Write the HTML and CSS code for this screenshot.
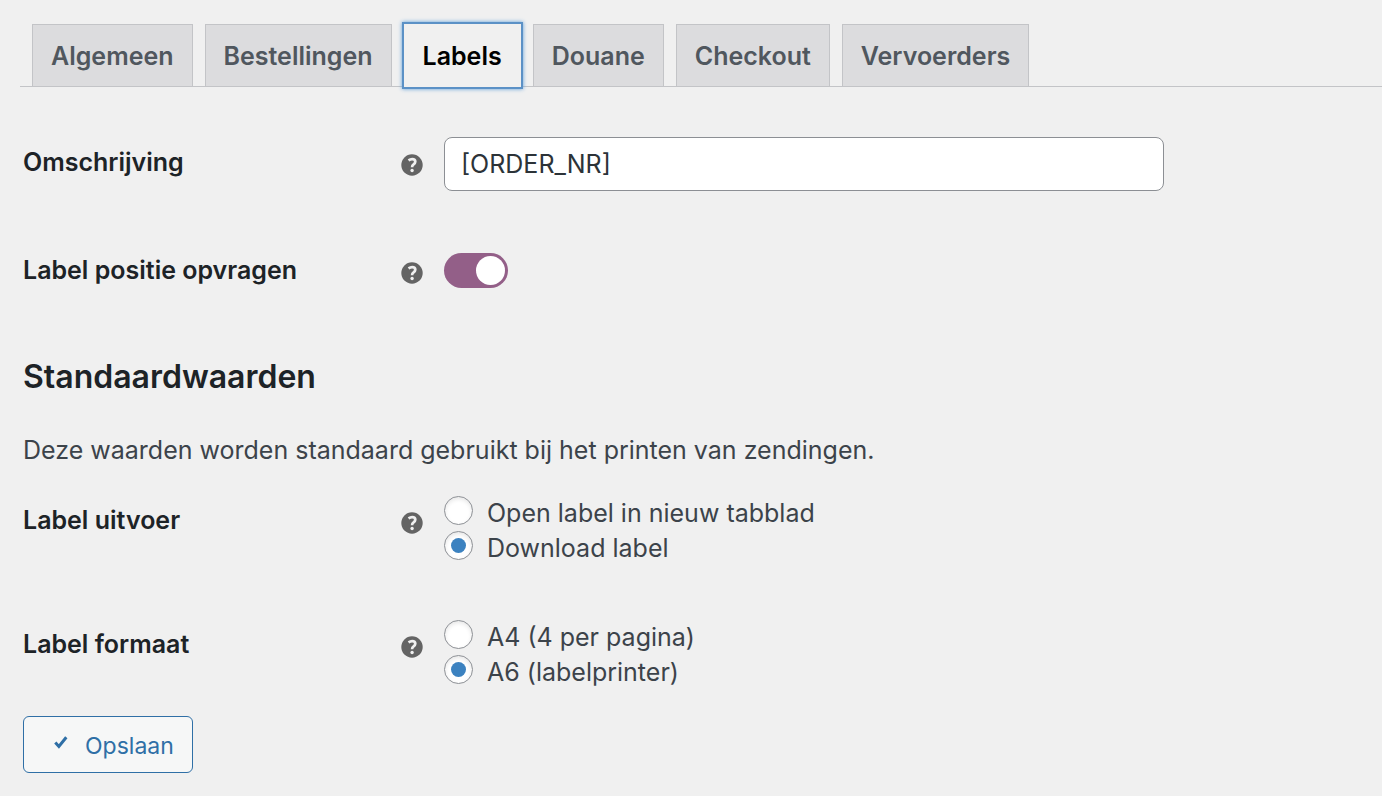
FILE: index.html
```html
<!DOCTYPE html>
<html lang="nl">
<head>
<meta charset="utf-8">
<meta name="viewport" content="width=device-width, initial-scale=1">
<title>Labels</title>
<link rel="stylesheet" href="styles.css">
</head>
<body>
<svg class="sprite" aria-hidden="true">
  <symbol id="help" viewBox="0 0 22 22">
    <circle cx="11" cy="11" r="10.7" fill="#646464"/>
    <path d="M7.5 6.4C9 5.4 9.9 5.1 11.1 5.1C13.2 5.1 14.3 6.1 14.3 7.7C14.3 9.2 13.3 9.9 12.3 10.6C11.4 11.2 11.1 11.7 11.1 13.3" fill="none" stroke="#f0f0f0" stroke-width="2.7"/>
    <circle cx="11.1" cy="16.5" r="1.7" fill="#f0f0f0"/>
  </symbol>
</svg>
<nav class="tabs">
  <a class="tab" href="#algemeen">Algemeen</a>
  <a class="tab" href="#bestellingen">Bestellingen</a>
  <a class="tab tab-active" href="#labels" aria-current="page">Labels</a>
  <a class="tab" href="#douane">Douane</a>
  <a class="tab" href="#checkout">Checkout</a>
  <a class="tab" href="#vervoerders">Vervoerders</a>
</nav>
<form class="settings">
  <div class="row row-description">
    <label class="row-label" for="description">Omschrijving</label>
    <svg class="help"><use href="#help"/></svg>
    <input class="text-input" id="description" type="text" value="[ORDER_NR]">
  </div>
  <div class="row row-position">
    <label class="row-label" for="position">Label positie opvragen</label>
    <svg class="help"><use href="#help"/></svg>
    <input class="toggle" id="position" type="checkbox" role="switch" checked>
  </div>
  <h2 class="heading">Standaardwaarden</h2>
  <p class="intro">Deze waarden worden standaard gebruikt bij het printen van zendingen.</p>
  <div class="row row-options" role="radiogroup" aria-labelledby="output-label">
    <span class="row-label" id="output-label">Label uitvoer</span>
    <svg class="help"><use href="#help"/></svg>
    <div class="options">
      <label class="option"><input class="radio" type="radio" name="output"><span class="option-text">Open label in nieuw tabblad</span></label>
      <label class="option"><input class="radio" type="radio" name="output" checked><span class="option-text">Download label</span></label>
    </div>
  </div>
  <div class="row row-options" role="radiogroup" aria-labelledby="format-label">
    <span class="row-label" id="format-label">Label formaat</span>
    <svg class="help"><use href="#help"/></svg>
    <div class="options">
      <label class="option"><input class="radio" type="radio" name="format"><span class="option-text">A4 (4 per pagina)</span></label>
      <label class="option"><input class="radio" type="radio" name="format" checked><span class="option-text">A6 (labelprinter)</span></label>
    </div>
  </div>
  <button class="save" type="button">
    <svg class="check" viewBox="0 0 14 13"><path d="M1.3 6.4L4.9 10.4L12.3 1.2" fill="none" stroke="#2f6fa6" stroke-width="3"/></svg>
    <span>Opslaan</span>
  </button>
</form>
</body>
</html>
```
FILE: styles.css
```css
* {
  box-sizing: border-box;
}

body {
  margin: 0;
  padding-top: 24px;
  background: #f0f0f0;
  color: #3c434a;
  font-family: Inter, "Liberation Sans", sans-serif;
  font-size: 25px;
  line-height: 35px;
}

.sprite {
  position: absolute;
  width: 0;
  height: 0;
}

.tabs {
  display: flex;
  gap: 12px;
  margin-left: 20px;
  padding-left: 12px;
  border-bottom: 1px solid #c3c4c7;
}

.tab {
  padding: 14px 18px 12px;
  border: 1px solid #c3c4c7;
  border-bottom: 0;
  background: #dcdcde;
  color: #50575e;
  font-weight: 600;
  text-decoration: none;
}

.tab-active {
  margin-bottom: -1px;
  border-color: #f0f0f0;
  background: #f0f0f0;
  color: #000;
  box-shadow: 0 0 0 2px #5b91c6, 0 0 4px 2px #5b9dd9;
}

.settings {
  padding: 50px 24px 22px 23px;
}

.row {
  display: grid;
  grid-template-columns: 357px 22px minmax(0, 720px);
  column-gap: 21px;
  align-items: start;
}

.row-label {
  color: #1d2327;
  font-weight: 600;
}

.help {
  width: 22px;
  height: 22px;
}

.row-description .row-label {
  padding-top: 8px;
}

.row-description .help {
  margin-top: 17px;
}

.text-input {
  width: 100%;
  height: 54px;
  padding: 0 16px;
  border: 1px solid #8c8f94;
  border-radius: 8px;
  background: #fff;
  color: #2c3338;
  font: inherit;
}

.row-position {
  margin-top: 62px;
}

.row-position .help {
  margin-top: 9px;
}

.toggle {
  display: flex;
  justify-content: flex-end;
  width: 64px;
  height: 35px;
  margin: 0;
  padding: 3px;
  border-radius: 18px;
  background: #935f88;
  appearance: none;
}

.toggle::before {
  content: "";
  width: 29px;
  height: 29px;
  border-radius: 50%;
  background: #fff;
}

.heading {
  margin: 68px 0 0;
  color: #1d2327;
  font-size: 32px;
  font-weight: 600;
  line-height: 42px;
}

.intro {
  margin: 35px 0 28px;
}

.row-options {
  margin-bottom: 54px;
}

.row-options:last-of-type {
  margin-bottom: 26px;
}

.row-options .row-label {
  padding-top: 7px;
}

.row-options .help {
  margin-top: 16px;
}

.option {
  display: flex;
  gap: 14px;
}

.radio {
  display: grid;
  place-items: center;
  width: 29px;
  height: 29px;
  margin: 0;
  border: 1px solid #8c8f94;
  border-radius: 50%;
  background: #fff;
  box-shadow: inset 0 2px 4px rgba(0, 0, 0, 0.1);
  appearance: none;
}

.radio:checked::before {
  content: "";
  width: 15px;
  height: 15px;
  border-radius: 50%;
  background: #3c82c0;
}

.save {
  display: flex;
  align-items: center;
  gap: 17px;
  height: 57px;
  padding: 4px 18px 0 30px;
  border: 1px solid #2f6fa6;
  border-radius: 6px;
  background: #f6f7f7;
  color: #2f6fa6;
  font: inherit;
  font-size: 23px;
}

.check {
  width: 14px;
  height: 13px;
  margin-bottom: 8px;
}
```
